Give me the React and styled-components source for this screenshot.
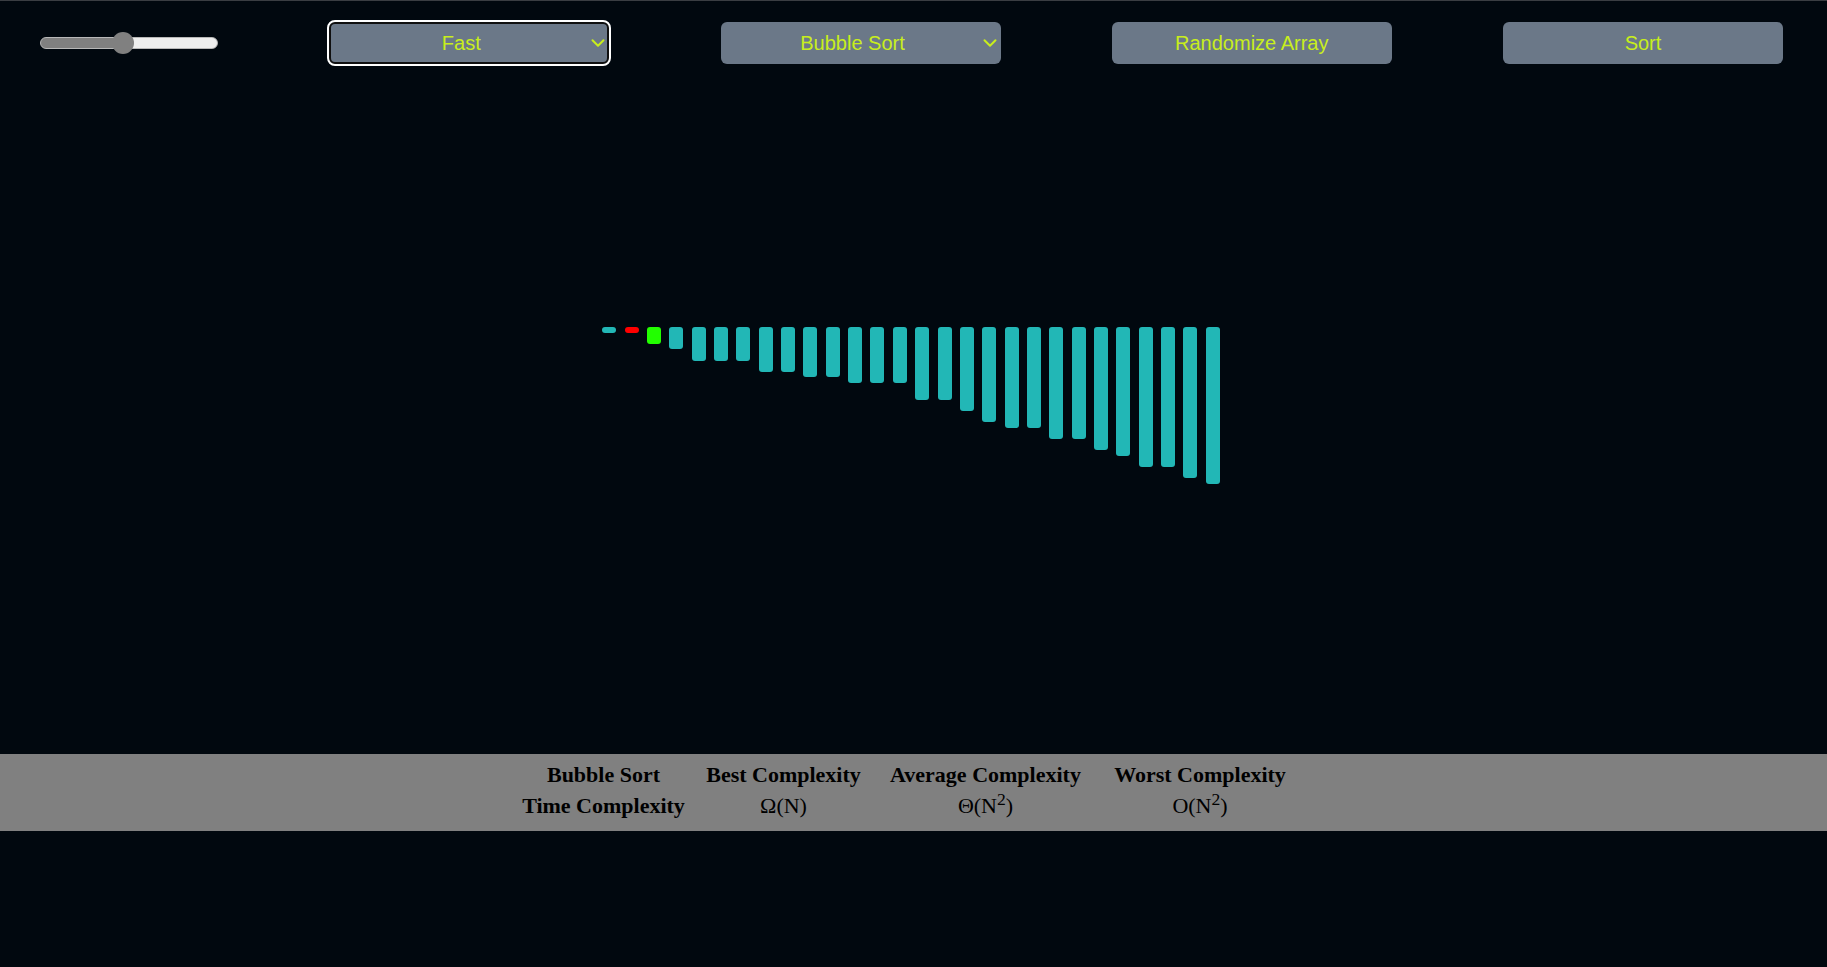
import React from 'react';
import styled, { createGlobalStyle } from 'styled-components';
import { ChevronDown } from 'lucide-react';

const BAR_UNIT = 5.6;
const values = [1, 1, 3, 4, 6, 6, 6, 8, 8, 9, 9, 10, 10, 10, 13, 13, 15, 17, 18, 18, 20, 20, 22, 23, 25, 25, 27, 28];
// index -> highlight state of the bar while sorting
const states = { 1: 'swap', 2: 'sorted' };

const GlobalStyle = createGlobalStyle`
    html, body {
        margin: 0;
        padding: 0;
        background: #01080f;
    }
    body {
        font-family: "Liberation Sans", Arial, sans-serif;
    }
`;

const Page = styled.div`
    min-height: 100vh;
    border-top: 1px solid #3a3d42;
    background: #01080f;
`;

const Toolbar = styled.div`
    display: flex;
    align-items: center;
    justify-content: space-between;
    padding: 21px 44px 22px 40px;
`;

const Slider = styled.input.attrs({ type: 'range' })`
    -webkit-appearance: none;
    appearance: none;
    box-sizing: border-box;
    width: 178px;
    height: 12px;
    margin: 0;
    border-radius: 6px;
    border: 1px solid #b8b8b8;
    background: linear-gradient(to right, #808080 0, #808080 var(--fill), #eeeeee var(--fill), #eeeeee 100%);
    outline: none;

    &::-webkit-slider-thumb {
        -webkit-appearance: none;
        appearance: none;
        width: 22px;
        height: 22px;
        border-radius: 50%;
        border: none;
        background: #808080;
        cursor: pointer;
    }
`;

const SelectWrap = styled.div`
    position: relative;
    width: 280px;
    height: 42px;
`;

const Select = styled.select`
    -webkit-appearance: none;
    appearance: none;
    box-sizing: border-box;
    width: 100%;
    height: 100%;
    padding: 0 16px 0 0;
    border-radius: 6px;
    border: ${props => props.$focused ? '2px solid #101010' : 'none'};
    outline: ${props => props.$focused ? '2px solid #ffffff' : 'none'};
    background: #6b7888;
    color: #c8ee1c;
    font-family: "Liberation Sans", Arial, sans-serif;
    font-size: 20px;
    text-align: center;
    text-align-last: center;
    cursor: pointer;
`;

const Chevron = styled(ChevronDown)`
    position: absolute;
    right: 0;
    top: 10px;
    color: #c8ee1c;
    pointer-events: none;
`;

const Button = styled.button`
    box-sizing: border-box;
    width: 280px;
    height: 42px;
    border: none;
    border-radius: 6px;
    background: #6b7888;
    color: #c8ee1c;
    font-family: "Liberation Sans", Arial, sans-serif;
    font-size: 20px;
    cursor: pointer;
`;

const Chart = styled.div`
    box-sizing: border-box;
    height: 668px;
    display: flex;
    justify-content: center;
    align-items: flex-start;
    gap: 8.37px;
    padding: 241px 5px 0 0;
`;

const barColors = {
    idle: '#22b7b6',
    swap: '#ff0000',
    sorted: '#22ff00',
};

const Bar = styled.div`
    width: 14px;
    flex-shrink: 0;
    border-radius: 3px;
    background: ${props => barColors[props.$state]};
`;

const Stats = styled.div`
    box-sizing: border-box;
    height: 77px;
    padding: 4.5px 11px 0 0;
    background: #808080;
    display: flex;
    justify-content: center;
`;

const StatsGrid = styled.div`
    display: grid;
    grid-template-columns: 180px 180px 224px 205px;
    grid-auto-rows: 31.6px;
    font-family: "Liberation Serif", "Times New Roman", serif;
    font-size: 22px;
    line-height: 31.6px;
    color: #000;
`;

const Cell = styled.div`
    text-align: center;
    white-space: nowrap;
    font-weight: ${props => props.$head ? 700 : 400};
`;

const Sup = styled.span`
    position: relative;
    top: -0.45em;
    font-size: 0.8em;
    line-height: 0;
`;

export default function App() {
    const size = 28;
    const fill = ((size - 5) / (55 - 5)) * 100;

    return (
        <Page>
            <GlobalStyle />
            <Toolbar>
                <Slider min={5} max={55} defaultValue={size} style={{ '--fill': `${fill}%` }} />
                <SelectWrap>
                    <Select $focused defaultValue="fast">
                        <option value="slow">Slow</option>
                        <option value="medium">Medium</option>
                        <option value="fast">Fast</option>
                    </Select>
                    <Chevron size={22} strokeWidth={2.2} />
                </SelectWrap>
                <SelectWrap>
                    <Select defaultValue="bubble">
                        <option value="bubble">Bubble Sort</option>
                        <option value="selection">Selection Sort</option>
                        <option value="insertion">Insertion Sort</option>
                        <option value="merge">Merge Sort</option>
                        <option value="quick">Quick Sort</option>
                    </Select>
                    <Chevron size={22} strokeWidth={2.2} />
                </SelectWrap>
                <Button>Randomize Array</Button>
                <Button>Sort</Button>
            </Toolbar>

            <Chart>
                {values.map((v, i) => (
                    <Bar key={i} $state={states[i] || 'idle'} style={{ height: `${v * BAR_UNIT}px` }} />
                ))}
            </Chart>

            <Stats>
                <StatsGrid>
                    <Cell $head>Bubble Sort</Cell>
                    <Cell $head>Best Complexity</Cell>
                    <Cell $head>Average Complexity</Cell>
                    <Cell $head>Worst Complexity</Cell>
                    <Cell $head>Time Complexity</Cell>
                    <Cell>Ω(N)</Cell>
                    <Cell>Θ(N<Sup>2</Sup>)</Cell>
                    <Cell>O(N<Sup>2</Sup>)</Cell>
                </StatsGrid>
            </Stats>
        </Page>
    );
}
